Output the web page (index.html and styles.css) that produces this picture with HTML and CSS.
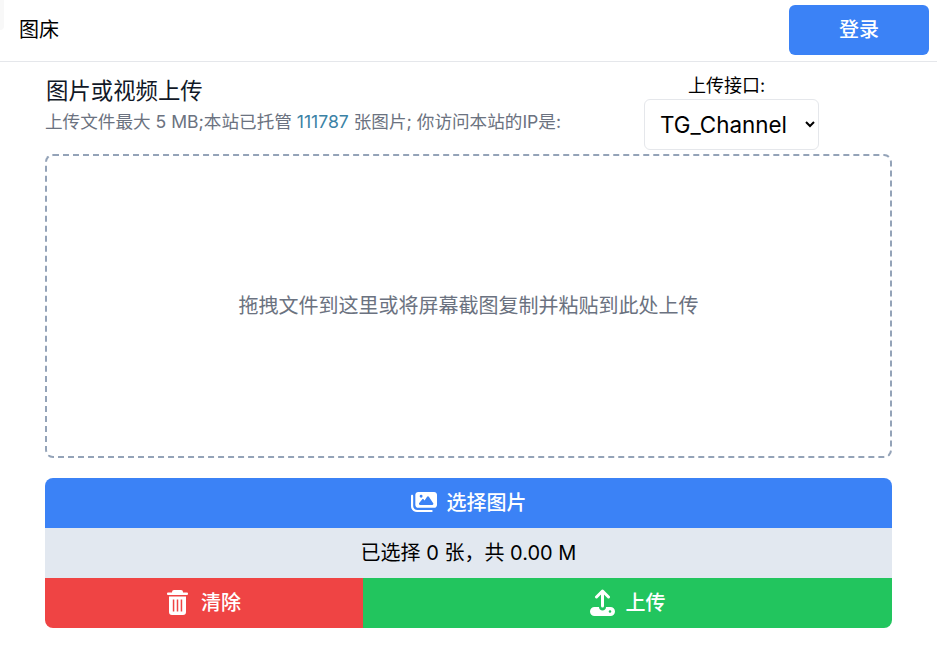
FILE: index.html
```html
<!DOCTYPE html>
<html lang="zh">
<head>
<meta charset="utf-8">
<title>图床</title>
<link rel="stylesheet" href="styles.css">
</head>
<body>
<div class="corner"></div>
<header class="topbar">
  <span class="brand">图床</span>
  <button class="login">登录</button>
</header>
<main class="content">
  <section class="head">
    <div class="intro">
      <h1 class="title">图片或视频上传</h1>
      <p class="sub">上传文件最大 5 MB;本站已托管 <span class="count">111787</span> 张图片; 你访问本站的IP是:</p>
    </div>
    <div class="api">
      <label class="api-label" for="api">上传接口:</label>
      <select class="api-select" id="api"><option>TG_Channel</option></select>
    </div>
  </section>
  <section class="drop">拖拽文件到这里或将屏幕截图复制并粘贴到此处上传</section>
  <section class="actions">
    <div class="bar bar-pick">
      <svg class="ico ico-pick" viewBox="0 0 576 512"><path fill="currentColor" d="M160 32c-35.300 0-64 28.700-64 64v224c0 35.300 28.700 64 64 64h352c35.300 0 64-28.700 64-64V96c0-35.300-28.700-64-64-64H160zm236 106.700l96 144c4.900 7.400 5.400 16.800 1.200 24.600S480.900 320 472 320H200c-9.300 0-17.700-5.300-21.700-13.700s-2.700-18.300 3.200-25.500l64-80c4.600-5.700 11.400-9 18.700-9s14.200 3.300 18.700 9l17.300 21.600 56-84C360.500 132 368 128 376 128s15.500 4 20 10.700zM192 128a32 32 0 1 1 64 0 32 32 0 1 1-64 0zM48 120c0-13.300-10.700-24-24-24S0 106.700 0 120v224c0 75.100 60.900 136 136 136h320c13.300 0 24-10.700 24-24s-10.700-24-24-24H136c-48.600 0-88-39.400-88-88V120z"/></svg>
      <span>选择图片</span>
    </div>
    <div class="bar bar-info">已选择 0 张，共 0.00 M</div>
    <div class="bar-row">
      <div class="bar bar-clear">
        <svg class="ico ico-trash" viewBox="0 0 21 25"><path fill="currentColor" fill-rule="evenodd" d="M7 0h7a2 2 0 0 1 2 2v.5h4a1 1 0 0 1 1 1V4a1 1 0 0 1-1 1H1a1 1 0 0 1-1-1v-.500a1 1 0 0 1 1-1h4V2a2 2 0 0 1 2-2zM2 6.500h17V22a3 3 0 0 1-3 3H5a3 3 0 0 1-3-3zM5.800 9.500v12h1.500v-12zm3.950 0v12h1.500v-12zm3.950 0v12h1.500v-12z"/></svg>
        <span>清除</span>
      </div>
      <div class="bar bar-upload">
        <svg class="ico ico-up" viewBox="0 0 25 27"><path fill="none" stroke="currentColor" stroke-width="3" stroke-linecap="round" stroke-linejoin="round" d="M12.500 17V2M6.500 8l6-6 6 6"/><path fill="currentColor" fill-rule="evenodd" d="M4.500 18H9c0 2 1.500 3.500 3.500 3.500S16 20 16 18h4.500a4.500 4.500 0 0 1 0 9h-16a4.500 4.500 0 0 1 0-9zM20 21.200a1.300 1.300 0 1 0 0 2.600 1.300 1.300 0 0 0 0-2.600z"/></svg>
        <span>上传</span>
      </div>
    </div>
  </section>
</main>
</body>
</html>
```
FILE: styles.css
```css
* { box-sizing: border-box; }
html, body { margin: 0; padding: 0; background: #fff; }
body {
  font-family: Inter, "Noto Sans CJK SC", sans-serif;
  color: #000;
  height: 646px;
  overflow: hidden;
}
.corner {
  position: absolute;
  left: 0;
  top: 0;
  width: 4px;
  height: 30px;
  background: #f8f8f8;
  border-bottom-right-radius: 4px;
}
.topbar {
  height: 62px;
  padding: 5px 8px 0 19px;
  display: flex;
  align-items: flex-start;
  justify-content: space-between;
  border-bottom: 1px solid #e5e7eb;
}
.brand { font-size: 20px; line-height: 50px; }
.login {
  width: 140px;
  height: 50px;
  padding: 0 0 4px;
  border: 0;
  border-radius: 6px;
  background: #3b82f6;
  color: #fff;
  font: 500 20px Inter, "Noto Sans CJK SC", sans-serif;
}
.content { padding: 0 45px; }
.head {
  display: flex;
  justify-content: space-between;
  height: 92px;
  padding-right: 73px;
}
.intro { padding-top: 14px; }
.title { margin: 0 0 0 1px; font-size: 22.4px; font-weight: 400; line-height: 30px; color: #111827; }
.sub { margin: 0; padding-top: 4px; font-size: 17.6px; line-height: 24px; color: #6b7280; }
.count { color: #3b82a6; }
.api { display: flex; flex-direction: column; align-items: center; padding-top: 11px; }
.api-label { font-size: 18px; line-height: 26px; padding-right: 10px; }
.api-select {
  width: 175px;
  height: 51px;
  padding: 0 10px 0 11px;
  border: 1px solid #e5e7eb;
  border-radius: 6px;
  background: #fff;
  color: #000;
  font: 22.4px Inter, sans-serif;
}
.drop {
  height: 304px;
  padding-bottom: 4px;
  border: 2px dashed #94a3b8;
  border-radius: 8px;
  display: flex;
  align-items: center;
  justify-content: center;
  font-size: 20px;
  color: #6b7280;
}
.actions {
  margin: 20px 0 0;
  border-radius: 8px;
  overflow: hidden;
}
.bar {
  height: 50px;
  padding-bottom: 2px;
  display: flex;
  align-items: center;
  justify-content: center;
  gap: 10px;
  font-size: 20px;
  color: #fff;
}
.bar span { font-weight: 500; margin-bottom: 2px; }
.bar-pick { background: #3b82f6; }
.bar-info { background: #e2e8f0; color: #000; padding-bottom: 4px; }
.bar-row { display: flex; }
.bar-clear { width: 318px; background: #ef4444; gap: 13px; }
.bar-upload { flex: 1; background: #22c55e; gap: 11px; }
.ico { display: block; }
.ico-pick { width: 26px; height: 24px; }
.ico-trash { width: 21px; height: 25px; }
.ico-up { width: 25px; height: 27px; }
```
